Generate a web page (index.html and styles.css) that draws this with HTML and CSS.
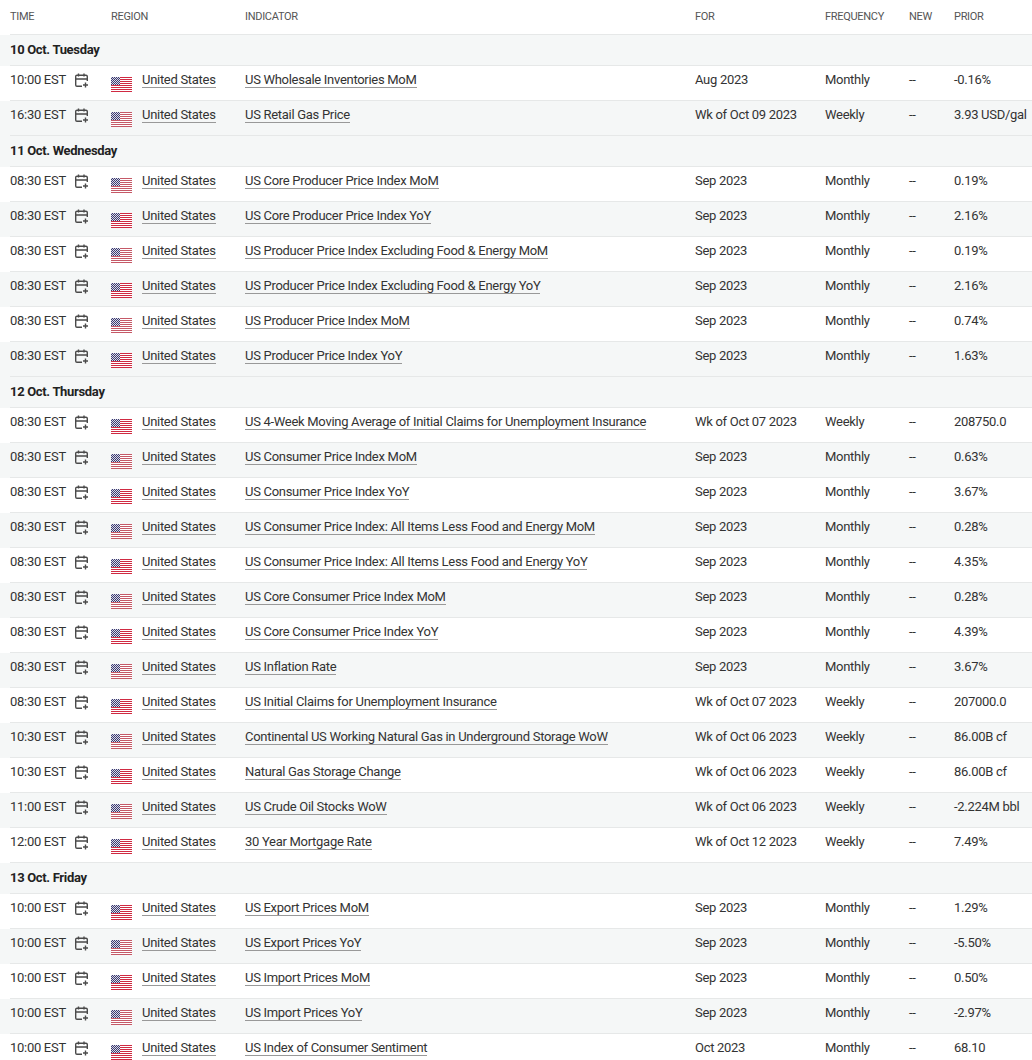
FILE: index.html
```html
<!DOCTYPE html>
<html lang="en">
<head>
<meta charset="utf-8">
<title>Economic calendar</title>
<link rel="stylesheet" href="styles.css">
</head>
<body>
<svg class="defs" width="0" height="0" aria-hidden="true">
  <defs>
    <symbol id="cal" viewBox="0 0 14 15">
      <path d="M3.500 .5v3M9 .5v3M2.500 2.200h8.500a1.300 1.300 0 0 1 1.300 1.300v4.500M7 13.300H2a1.300 1.300 0 0 1-1.300-1.300V3.500a1.300 1.300 0 0 1 1.300-1.300H2.500M.7 6h11.600M10.500 9.500v5M8 12h5" fill="none" stroke="#4a4a4a" stroke-width="1.400"/>
    </symbol>
    <pattern id="dots" width="2" height="2" patternUnits="userSpaceOnUse">
      <rect width="2" height="2" fill="#3c3b6e"/>
      <rect width="1" height="1" fill="#d8d8e8"/>
      <rect x="1" y="1" width="1" height="1" fill="#d8d8e8"/>
    </pattern>
    <symbol id="flag-a" viewBox="0 0 21 15">
      <rect width="21" height="15" fill="#fff"/>
      <path d="M0 0h21v1H0zM0 2h21v1H0zM0 4h21v1H0zM0 6h21v1H0zM0 8h21v1H0zM0 10h21v1H0zM0 12h21v1H0zM0 14h21v1H0z" fill="#b22234" opacity=".75"/>
      <rect width="9" height="8" fill="url(#dots)"/>
    </symbol>
    <symbol id="flag-b" viewBox="0 0 21 15">
      <rect width="21" height="15" fill="#fff"/>
      <path d="M0 0h21v1H0zM0 2h21v1H0zM0 4h21v1H0zM0 6h21v1H0zM0 8h21v1H0zM0 10h21v1H0zM0 12h21v1H0zM0 14h21v1H0z" fill="#d02a42"/>
      <rect width="9" height="8" fill="url(#dots)"/>
    </symbol>
  </defs>
</svg>
<div class="cal">
  <div class="cells head"><span>TIME</span><span></span><span>REGION</span><span>INDICATOR</span><span>FOR</span><span>FREQUENCY</span><span>NEW</span><span>PRIOR</span></div>
  <div id="rows"></div>
</div>
<script src="app.js"></script>
</body>
</html>
```
FILE: styles.css
```css
html, body { margin: 0; height: 100%; overflow: hidden; background: #fff; }
body { font-family: Roboto, "Liberation Sans", sans-serif; font-size: 13px; letter-spacing: -.29px; color: #333; }
.defs { position: absolute; }
.cal { width: 1032px; }
.cells {
  display: grid;
  grid-template-columns: 65px 36px 134px 450px 130px 84px 45px 78px;
  margin-left: 10px;
  border-bottom: 1px solid #e6e8e8;
  align-items: center;
  box-sizing: border-box;
  white-space: nowrap;
}
.head { height: 35px; font-size: 11px; letter-spacing: -.3px; color: #555; padding-bottom: 2px; }
.group { height: 31px; background: #f5f7f7; }
.group .cells { height: 31px; display: flex; font-weight: 700; color: #222; padding-bottom: 2px; letter-spacing: -.32px; }
.row { height: 35px; }
.row.alt { background: #f5f7f7; }
.row .cells { height: 35px; padding-bottom: 8px; }
.cal-icon { width: 14px; height: 15px; display: block; margin-top: 2px; }
.region { display: flex; align-items: center; }
.region a { margin-top: 2px; }
.flag { width: 21px; height: 15px; flex: none; margin: 11px 10px 0 0; }
a { color: inherit; text-decoration: none; border-bottom: 1px solid #999; }
```
FILE: app.js
```js
const M = 'Monthly', W = 'Weekly';
const data = [
  ['10 Oct. Tuesday', [
    ['10:00','US Wholesale Inventories MoM','Aug 2023',M,'-0.16%'],
    ['16:30','US Retail Gas Price','Wk of Oct 09 2023',W,'3.93 USD/gal']]],
  ['11 Oct. Wednesday', [
    ['08:30','US Core Producer Price Index MoM','Sep 2023',M,'0.19%'],
    ['08:30','US Core Producer Price Index YoY','Sep 2023',M,'2.16%'],
    ['08:30','US Producer Price Index Excluding Food &amp; Energy MoM','Sep 2023',M,'0.19%'],
    ['08:30','US Producer Price Index Excluding Food &amp; Energy YoY','Sep 2023',M,'2.16%'],
    ['08:30','US Producer Price Index MoM','Sep 2023',M,'0.74%'],
    ['08:30','US Producer Price Index YoY','Sep 2023',M,'1.63%']]],
  ['12 Oct. Thursday', [
    ['08:30','US 4-Week Moving Average of Initial Claims for Unemployment Insurance','Wk of Oct 07 2023',W,'208750.0'],
    ['08:30','US Consumer Price Index MoM','Sep 2023',M,'0.63%'],
    ['08:30','US Consumer Price Index YoY','Sep 2023',M,'3.67%'],
    ['08:30','US Consumer Price Index: All Items Less Food and Energy MoM','Sep 2023',M,'0.28%'],
    ['08:30','US Consumer Price Index: All Items Less Food and Energy YoY','Sep 2023',M,'4.35%'],
    ['08:30','US Core Consumer Price Index MoM','Sep 2023',M,'0.28%'],
    ['08:30','US Core Consumer Price Index YoY','Sep 2023',M,'4.39%'],
    ['08:30','US Inflation Rate','Sep 2023',M,'3.67%'],
    ['08:30','US Initial Claims for Unemployment Insurance','Wk of Oct 07 2023',W,'207000.0'],
    ['10:30','Continental US Working Natural Gas in Underground Storage WoW','Wk of Oct 06 2023',W,'86.00B cf'],
    ['10:30','Natural Gas Storage Change','Wk of Oct 06 2023',W,'86.00B cf'],
    ['11:00','US Crude Oil Stocks WoW','Wk of Oct 06 2023',W,'-2.224M bbl'],
    ['12:00','30 Year Mortgage Rate','Wk of Oct 12 2023',W,'7.49%']]],
  ['13 Oct. Friday', [
    ['10:00','US Export Prices MoM','Sep 2023',M,'1.29%'],
    ['10:00','US Export Prices YoY','Sep 2023',M,'-5.50%'],
    ['10:00','US Import Prices MoM','Sep 2023',M,'0.50%'],
    ['10:00','US Import Prices YoY','Sep 2023',M,'-2.97%'],
    ['10:00','US Index of Consumer Sentiment','Oct 2023',M,'68.10']]]
];
let html = '', y = 35;
for (const [day, rows] of data) {
  html += `<div class="group"><div class="cells">${day}</div></div>`;
  y += 31;
  rows.forEach((r, i) => {
    const flag = (y + 11) % 2 ? 'b' : 'a';
    html += `<div class="row${i % 2 ? ' alt' : ''}"><div class="cells">
      <span>${r[0]} EST</span>
      <span><svg class="cal-icon"><use href="#cal"/></svg></span>
      <span class="region"><svg class="flag"><use href="#flag-${flag}"/></svg><a href="#">United States</a></span>
      <span><a href="#">${r[1]}</a></span><span>${r[2]}</span><span>${r[3]}</span><span>--</span><span>${r[4]}</span>
    </div></div>`;
    y += 35;
  });
}
document.getElementById('rows').innerHTML = html;
```
